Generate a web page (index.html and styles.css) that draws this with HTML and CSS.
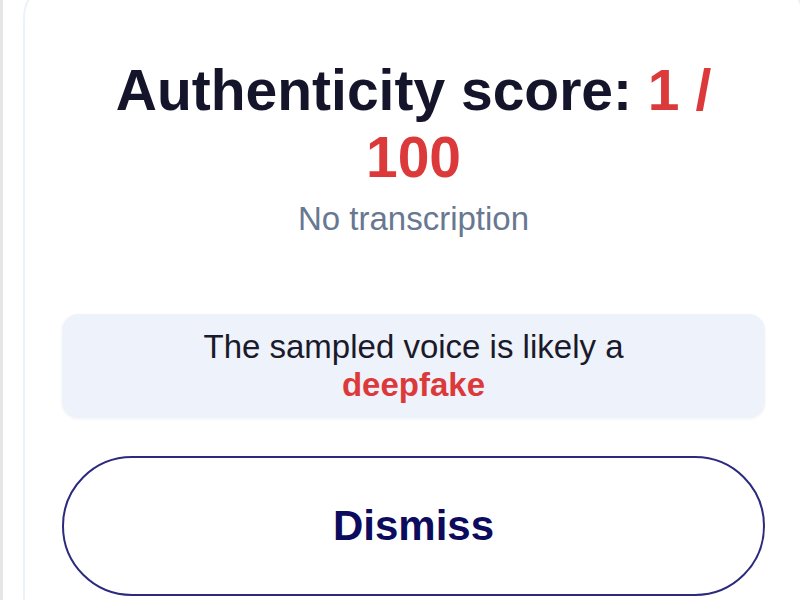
FILE: index.html
```html
<!DOCTYPE html>
<html lang="en">
<head>
<meta charset="utf-8">
<title>Authenticity score</title>
<link rel="stylesheet" href="styles.css">
</head>
<body>
<div class="page">
  <div class="card">
    <h1 class="title">Authenticity score: <span class="score">1 / 100</span></h1>
    <p class="subtitle">No transcription</p>
    <div class="verdict">
      <p class="verdict-text">The sampled voice is likely a</p>
      <p class="verdict-label">deepfake</p>
    </div>
    <button class="dismiss" type="button">Dismiss</button>
  </div>
</div>
</body>
</html>
```
FILE: styles.css
```css
html, body {
  margin: 0;
  padding: 0;
  background: #ffffff;
  overflow: hidden;
  height: 600px;
}

body {
  font-family: "Liberation Sans", Arial, sans-serif;
}

.page {
  display: flex;
  align-items: flex-start;
  height: 600px;
  border-left: 3px solid #e6e6e6;
  padding-left: 20px;
}

.card {
  flex: none;
  width: 703px;
  margin-top: -22px;
  padding: 77px 37px 40px;
  border: 2px solid #edf1f9;
  border-radius: 40px;
  background: #ffffff;
  display: flex;
  flex-direction: column;
  align-items: stretch;
}

.card > * {
  flex: none;
}

.title {
  margin: 0;
  font-size: 57px;
  line-height: 67px;
  font-weight: 700;
  color: #14142a;
  text-align: center;
}

.score {
  color: #dc3a3a;
}

.subtitle {
  margin: 9px 0 0;
  font-size: 33px;
  line-height: 38px;
  color: #687891;
  text-align: center;
}

.verdict {
  margin-top: 76px;
  padding: 14px 16px 14px;
  background: #eef2fb;
  border-radius: 16px;
  box-shadow: 0 1px 3px rgba(30, 40, 80, 0.06);
  text-align: center;
}

.verdict-text {
  margin: 0;
  font-size: 33px;
  line-height: 38px;
  color: #1a1a2a;
}

.verdict-label {
  margin: 0;
  font-size: 33px;
  line-height: 38px;
  font-weight: 700;
  color: #dc3a3a;
}

.dismiss {
  margin-top: 38px;
  height: 140px;
  width: 100%;
  border: 2px solid #2b2a7c;
  border-radius: 70px;
  background: #ffffff;
  font-family: "Liberation Sans", Arial, sans-serif;
  font-size: 42px;
  font-weight: 700;
  color: #0c0b5e;
  padding: 0;
}
```
